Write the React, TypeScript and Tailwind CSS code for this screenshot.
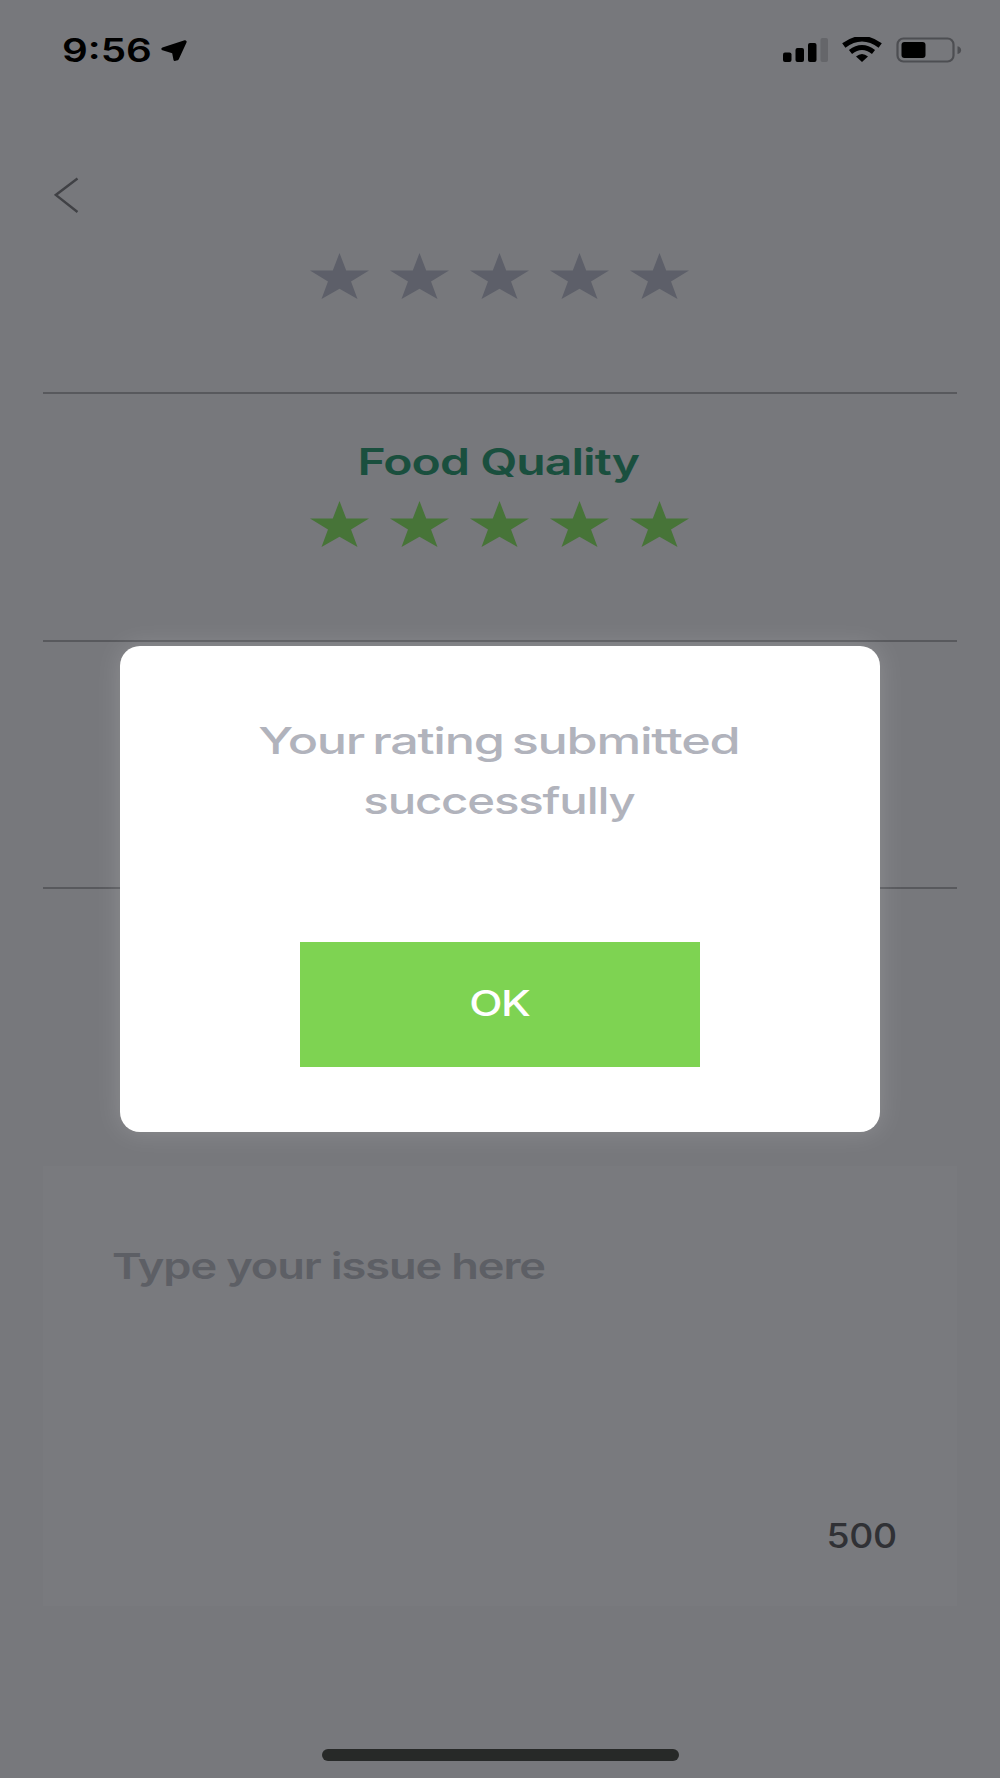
function StatusBar() {
  return (
    <header className="flex h-[100px] items-center justify-between pr-[38px] pl-[62px] text-black">
      <div className="flex items-center pt-[2px]">
        <div className="w-[98px]">
          <span className="inline-block origin-left scale-x-[1.26] text-[32px] leading-[40px] font-semibold whitespace-nowrap">
            9:56
          </span>
        </div>
        <svg className="mb-[2px] h-[23px] w-[28px]" viewBox="0 0 29 23" fill="currentColor" stroke="currentColor">
          <path d="M26 2.500 3 9.800 14 13l1.500 7.700L18 20z" strokeWidth="3.2" strokeLinejoin="round" />
        </svg>
      </div>
      <div className="flex items-center">
        <svg className="mr-[13px] h-[26px] w-[46px]" viewBox="0 0 46 26" fill="currentColor">
          <rect x="1" y="15.5" width="8.5" height="9.5" rx="2" />
          <rect x="13.5" y="11" width="8.5" height="14" rx="2" />
          <rect x="26" y="6" width="8.5" height="19" rx="2" />
          <rect x="38.5" y="1" width="7.5" height="24" rx="2" className="fill-[#65666a]" />
        </svg>
        <svg className="mr-[13px] h-[26px] w-[42px]" viewBox="0 0 42 26" fill="none" stroke="currentColor">
          <path d="M2.800 8.500Q21-5 39.200 8.500" strokeWidth="5.4" />
          <path d="M9.500 15Q21 6 32.500 15" strokeWidth="5" />
          <path d="M15 19.500Q21 14.500 27 19.500L21 25z" fill="currentColor" stroke="none" />
        </svg>
        <svg className="h-[26px] w-[66px]" viewBox="0 0 66 26">
          <rect x="1.5" y="1.5" width="56" height="23" rx="6" fill="none" className="stroke-[#4d4e52]" strokeWidth="2.2" />
          <rect x="5.5" y="5" width="24" height="16" rx="3" fill="currentColor" />
          <path d="M61.5 9.3c2.400.6 3.600 2 3.600 3.900s-1.200 3.300-3.600 3.900z" className="fill-[#4d4e52]" />
        </svg>
      </div>
    </header>
  );
}

function Stars({ className }: { className: string }) {
  return (
    <div className={`flex justify-center gap-5 ${className}`}>
      {[0, 1, 2, 3, 4].map((i) => (
        <svg key={i} className="h-[46px] w-[60px]" viewBox="0 0 60 46" fill="currentColor">
          <path d="M29.500 0l6.700 17.600h22.800L41 28.500 47.500 46 29.500 35.700 11.500 46 18 28.500 0 17.600h22.800z" />
        </svg>
      ))}
    </div>
  );
}

function Dialog() {
  return (
    <div className="absolute inset-x-[120px] top-[646px] flex h-[486px] flex-col items-center rounded-[20px] bg-white pt-[65px] shadow-[0_0_24px_1px_rgba(255,255,255,0.16)]">
      <p className="flex flex-col items-center pr-[2px] text-[37px] leading-[60px] font-medium tracking-[-0.025em] whitespace-nowrap text-[#b1b3bc]">
        <span className="scale-x-[1.36] [word-spacing:-3px]">Your rating submitted</span>
        <span className="scale-x-[1.28]">successfully</span>
      </p>
      <button className="mt-[111px] flex h-[125px] w-[400px] items-center justify-center bg-[#7ed352] pr-px pb-[4px] text-white">
        <span className="scale-x-[1.24] text-[35px] leading-[40px] font-medium tracking-[-0.03em]">OK</span>
      </button>
    </div>
  );
}

export default function App() {
  return (
    <div className="relative flex h-[1778px] w-[1000px] flex-col overflow-hidden bg-[#77787c] font-['Inter',sans-serif]">
      <StatusBar />
      <main className="flex flex-col px-[43px]">
        <section className="h-[294px] border-b-2 border-[#58595d] pt-[77px]">
          <svg className="ml-[11px] h-[37px] w-[26px]" viewBox="0 0 26 37" fill="none">
            <path d="M23.500 1.500 1.800 18 23.500 35" className="stroke-[#404145]" strokeWidth="2.4" />
          </svg>
          <Stars className="mt-[39px] text-[#5d5f69]" />
        </section>
        <section className="flex h-[248px] flex-col items-center border-b-2 border-[#58595d] pt-[48px]">
          <h2 className="mr-[3px] scale-x-[1.3] text-[37px] leading-[40px] font-semibold tracking-[-0.02em] whitespace-nowrap text-[#1a4f3e]">
            Food Quality
          </h2>
          <Stars className="mt-[19px] text-[#477438]" />
        </section>
        <section className="h-[247px] border-b-2 border-[#58595d]" />
        <section className="mt-[277px] flex h-[440px] flex-col justify-between bg-[#797a7e] pt-[80px] pr-[60px] pb-[50px] pl-[69px]">
          <p className="origin-left scale-x-[1.255] self-start text-[36px] leading-[40px] font-semibold tracking-[-0.025em] whitespace-nowrap text-[#5d5f65]">
            Type your issue here
          </p>
          <p className="origin-right scale-x-[1.1] self-end text-[34px] leading-[40px] font-medium tracking-[-0.01em] text-[#303135]">
            500
          </p>
        </section>
      </main>
      <div className="mx-auto mt-auto mb-[17px] h-3 w-[357px] rounded-full bg-[#272928]" />
      <Dialog />
    </div>
  );
}
